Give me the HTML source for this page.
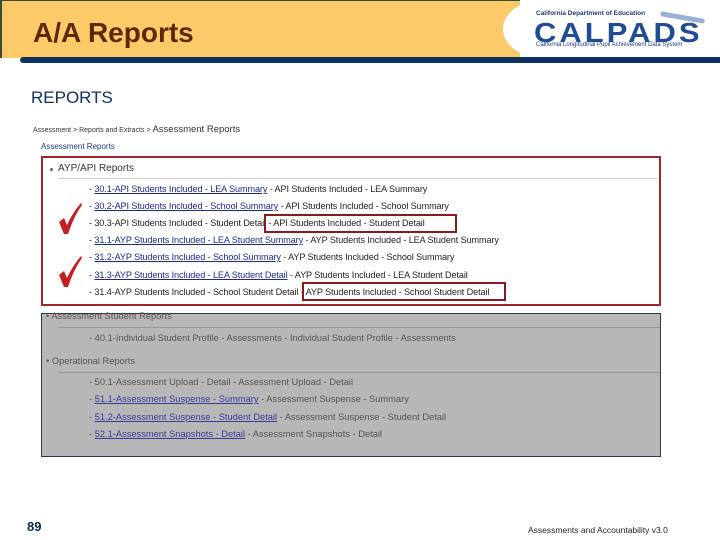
<!DOCTYPE html>
<html><head><meta charset="utf-8"><style>
*{margin:0;padding:0;box-sizing:border-box}
body{width:720px;height:540px;position:relative;background:#fff;font-family:"Liberation Sans",Arial,sans-serif;overflow:hidden}
.a{position:absolute;white-space:nowrap}
.r{position:absolute;font-size:9.1px;color:#222;white-space:nowrap;letter-spacing:-0.1px}
.r u{color:#1a2a8a}
.g{position:absolute;font-size:9.3px;color:#555;white-space:nowrap}
.g u{color:#3a3a9a}
.b{position:absolute;width:3px;height:3px;background:#666;border-radius:50%}
</style></head><body>
<div class="a" style="left:0;top:0;width:520px;height:58px;background:#fdca6a;border-top:1px solid #3a4a3a;border-left:2px solid #3a4a3a"></div>
<div class="a" style="left:503px;top:0;width:240px;height:58px;background:#fff;border-radius:40px 0 0 40px/29px 0 0 29px"></div>
<div class="a" style="left:20px;top:57px;width:700px;height:6px;background:#0d3260;border-radius:4px 0 0 4px"></div>
<div class="a" style="left:33px;top:17px;font-size:28px;font-weight:bold;color:#5a2a08">A/A Reports</div>
<div class="a" style="left:536px;top:10px;font-size:6.5px;font-weight:bold;color:#1a3a7a">California Department of Education</div>
<div class="a" style="left:534px;top:15px;font-size:31px;color:#1e4c96;letter-spacing:3px;font-weight:bold;transform:scaleY(0.9)">CALPADS</div>
<div class="a" style="left:536px;top:42px;font-size:6px;color:#1a3a7a">California Longitudinal Pupil Achievement Data System</div>
<div class="a" style="left:660px;top:15px;width:45px;height:5px;background:#9ab0d8;transform:rotate(10deg);border-radius:3px"></div>
<div class="a" style="left:31px;top:88px;font-size:17px;color:#0d3260">REPORTS</div>
<div class="a" style="left:33px;top:124px;font-size:7px;color:#333">Assessment &gt; Reports and Extracts &gt; <span style="font-size:9.5px">Assessment Reports</span></div>
<div class="a" style="left:41px;top:142px;font-size:8px;color:#1a3a7a">Assessment Reports</div>

<div class="a" style="left:41px;top:156px;width:620px;height:150px;border:2px solid #a0282a"></div>
<div class="b" style="left:50px;top:168px"></div>
<div class="a" style="left:58px;top:163px;font-size:10px;color:#333">AYP/API Reports</div>
<div class="a" style="left:58px;top:178px;width:600px;height:1px;background:#ccc"></div>
<div class="r" style="left:89px;top:184px">- <u>30.1-API Students Included - LEA Summary</u> - API Students Included - LEA Summary</div>
<div class="r" style="left:89px;top:201px">- <u>30.2-API Students Included - School Summary</u> - API Students Included - School Summary</div>
<div class="r" style="left:89px;top:218px">- 30.3-API Students Included - Student Detail - API Students Included - Student Detail</div>
<div class="r" style="left:89px;top:235px">- <u>31.1-AYP Students Included - LEA Student Summary</u> - AYP Students Included - LEA Student Summary</div>
<div class="r" style="left:89px;top:252px">- <u>31.2-AYP Students Included - School Summary</u> - AYP Students Included - School Summary</div>
<div class="r" style="left:89px;top:270px">- <u>31.3-AYP Students Included - LEA Student Detail</u> - AYP Students Included - LEA Student Detail</div>
<div class="r" style="left:89px;top:287px">- 31.4-AYP Students Included - School Student Detail - AYP Students Included - School Student Detail</div>
<div class="a" style="left:264px;top:214px;width:193px;height:19px;border:2px solid #8a1a1e"></div>
<div class="a" style="left:302px;top:282px;width:204px;height:19px;border:2px solid #8a1a1e"></div>
<svg class="a" style="left:55px;top:198px" width="30" height="95" viewBox="0 0 30 95">
<path d="M4 24 L9 20 L12 27 Q18 14 26 5 L27 7 Q19 18 13 36 L9 36 Z" fill="#c41e24"/>
<path d="M4 77 L9 73 L12 80 Q18 67 26 58 L27 60 Q19 71 13 89 L9 89 Z" fill="#c41e24"/>
</svg>

<div class="a" style="left:41px;top:313px;width:620px;height:144px;background:#b7b7b7;border:1px solid #2a3a4a"></div>
<div class="g" style="left:46px;top:311px">• Assessment Student Reports</div>
<div class="a" style="left:58px;top:327px;width:602px;height:1px;background:#999"></div>
<div class="g" style="left:89px;top:333px">- 40.1-Individual Student Profile - Assessments - Individual Student Profile - Assessments</div>
<div class="g" style="left:46px;top:356px">• Operational Reports</div>
<div class="a" style="left:58px;top:372px;width:602px;height:1px;background:#999"></div>
<div class="g" style="left:89px;top:377px">- 50.1-Assessment Upload - Detail - Assessment Upload - Detail</div>
<div class="g" style="left:89px;top:394px">- <u>51.1-Assessment Suspense - Summary</u> - Assessment Suspense - Summary</div>
<div class="g" style="left:89px;top:412px">- <u>51.2-Assessment Suspense - Student Detail</u> - Assessment Suspense - Student Detail</div>
<div class="g" style="left:89px;top:429px">- <u>52.1-Assessment Snapshots - Detail</u> - Assessment Snapshots - Detail</div>

<div class="a" style="left:27px;top:519px;font-size:13px;font-weight:bold;color:#0d2a4a">89</div>
<div class="a" style="left:528px;top:525px;font-size:8.5px;color:#222">Assessments and Accountability v3.0</div>
</body></html>
